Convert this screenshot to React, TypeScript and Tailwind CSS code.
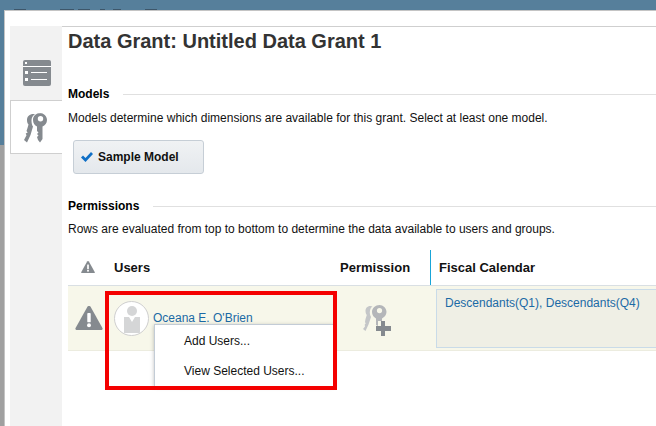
import React from 'react';

const font = { fontFamily: '"Liberation Sans", Arial, sans-serif' };

const ListIcon = () => (
  <svg width="28" height="26" viewBox="0 0 28 26">
    <rect x="0" y="0" width="28" height="26" rx="2" fill="#858a8f" />
    <rect x="2" y="2" width="2" height="2" fill="#fff" />
    <rect x="2" y="11" width="3" height="3" fill="#fff" />
    <rect x="2" y="18" width="3" height="3" fill="#fff" />
    <rect x="0" y="6" width="28" height="1" fill="#fff" />
    <rect x="8" y="12" width="16" height="1" fill="#fff" />
    <rect x="8" y="19" width="16" height="1" fill="#fff" />
  </svg>
);

const KeysIcon = () => (
  <svg width="27" height="31" viewBox="0 0 27 31">
    <path
      d="M9.500 1C5.500 1 3 3.500 3 7c0 2 .6 3.500 1.500 4.500L3.500 15l-1 3 1.200 1.500-2 1 .8 1.800L0 27l3 2.500 3.500-7.500 2.500-8.500c-1-1-1.500-3.500-1.500-6C7.500 5 8.500 2.500 11 1.200z"
      fill="#858a8f"
    />
    <path
      fillRule="evenodd"
      d="M16.500 0C12 0 9 3 9 7c0 3.200 1.700 5.600 4 6.600V18l1.500 1.500-1.500 1.500 1.500 1.500-1.500 1.500 1 3 2 2.500 2.500-3.500V13.600c2.500-1 4.500-3.400 4.500-6.600 0-4-3.500-7-7-7zm0 3a2.700 2.700 0 1 1 0 5.400 2.700 2.700 0 0 1 0-5.400z"
      fill="#858a8f"
    />
  </svg>
);

const KeyPlusIcon = () => (
  <svg width="28" height="31" viewBox="0 0 28 31">
    <path d="M7.500 1C4 1 2.500 3.500 2.500 6c0 1.500.5 3 1.300 4L2.500 14l-.5 3 .7 1.500-1 1 .3 2L0 24l2.500 2 3-6.500L8 12C7 10 6.500 8 7 5.500 7.300 4 8 2.500 9.500 1.500z" fill="#c4c6c8" />
    <path
      fillRule="evenodd"
      d="M16.500 0C12.500 0 9 3 9 7c0 3 1.800 5.300 4 6.400V20l2 1v-5h4v-2.600c2.300-1.100 4.500-3.400 4.500-6.400 0-4-3.500-7-7-7zm0 3a2.600 2.600 0 1 1 0 5.200 2.600 2.600 0 0 1 0-5.200z"
      fill="#b4b6b9"
    />
    <path d="M18 16h4v5h6v5h-6v5h-4v-5h-5v-5h5z" fill="#858a8f" />
  </svg>
);

const Warning = ({ size }: { size: number }) => (
  <svg width={size} height={size * 0.86} viewBox="0 0 32 28">
    <path d="M16 0c1 0 1.600.5 2 1.200l13.600 24.300c.7 1.300 0 2.500-1.500 2.500H1.900C.4 28-.3 26.800.4 25.500L14 1.200C14.400.5 15 0 16 0z" fill="#858a8f" />
    <rect x="14" y="8" width="4" height="11" rx="1" fill="#fff" />
    <circle cx="16" cy="22.500" r="2.300" fill="#fff" />
  </svg>
);

const Avatar = () => (
  <div className="flex h-[35px] w-[35px] items-end justify-center overflow-hidden rounded-full border border-[#cfcfcf] bg-white pb-[2px]">
    <svg width="16" height="27" viewBox="0 0 16 27">
      <circle cx="8" cy="5" r="5" fill="#d5d6d7" />
      <path d="M0 11h5l3 5 3-5h5v16H0z" fill="#d5d6d7" />
    </svg>
  </div>
);

const Section = ({ title, gap, children }: { title: string; gap: string; children: React.ReactNode }) => (
  <div>
    <div className="flex items-center gap-[14px]">
      <h2 className="text-[12px] leading-[14px] font-bold text-[#000]">{title}</h2>
      <div className="h-px flex-1 bg-[#e0e0e0]" />
    </div>
    <p className={`${gap} text-[12px] leading-[14px] text-[#111]`}>{children}</p>
  </div>
);

// clipped text of the page behind the dialog
const behind = [
  ['left-[14px]', 'w-[12px]'],
  ['left-[60px]', 'w-[14px]'],
  ['left-[78px]', 'w-[12px]'],
  ['left-[100px]', 'w-[5px]'],
  ['left-[113px]', 'w-[8px]'],
  ['left-[145px]', 'w-[12px]'],
];

export default function App() {
  return (
    <div className="relative flex h-[426px] w-[656px] overflow-hidden bg-[#567f9b]" style={font}>
      {behind.map(([left, width]) => (
        <div key={left} className={`absolute top-[9px] h-px bg-[#3d566a] ${left} ${width}`} />
      ))}

      <div className="flex w-[4px] flex-col">
        <div className="h-[145px] bg-[#567f9b]" />
        <div className="flex-1 bg-[#a0a0a0]" />
      </div>

      <div className="mt-[10px] flex flex-1 flex-col border-t border-l border-[#c4c4c4] bg-white pt-[15px] pl-[5px]">
        <div className="flex flex-1">
          {/* left tabs */}
          <div className="w-[52px] shrink-0 bg-[#f2f2f2]">
            <div className="flex h-[74px] items-end justify-center pb-[14px] pl-[2px]">
              <ListIcon />
            </div>
            <div className="flex h-[54px] w-[52px] items-center justify-center border-y border-l border-[#cfcfcf] bg-white pt-[3px] pl-[2px]">
              <KeysIcon />
            </div>
          </div>

          <div className="flex-1 border-t border-[#cfcfcf]">
            <div className="pl-[6px]">
              <h1 className="mt-[3px] text-[20px] leading-[22px] font-bold text-[#333]">Data Grant: Untitled Data Grant 1</h1>

              <div className="mt-[35px]">
                <Section title="Models" gap="mt-[10px]">
                  Models determine which dimensions are available for this grant. Select at least one model.
                </Section>
              </div>

              <button className="mt-[15px] ml-[5px] flex h-[34px] w-[131px] items-center gap-[5px] rounded-[3px] border border-[#c6ced6] bg-gradient-to-b from-[#f0f2f4] to-[#e4e8ec] pl-[7px] text-[12px] font-bold text-[#111]">
                <svg width="12" height="10" viewBox="0 0 12 10">
                  <path d="M0 5.500 2 3.500 4.500 6 10 0l2 2-7.500 8z" fill="#0f6fc6" />
                </svg>
                Sample Model
              </button>

              <div className="mt-[25px]">
                <Section title="Permissions" gap="mt-[9px]">
                  Rows are evaluated from top to bottom to determine the data available to users and groups.
                </Section>
              </div>
            </div>

            {/* table */}
            <div className="mt-[14px] ml-[6px]">
              <div className="flex h-[36px] items-center border-b border-[#d9dfe3] text-[13px] font-bold text-[#111]">
                <div className="flex w-[40px] justify-center">
                  <Warning size={14} />
                </div>
                <div className="w-[232px] pl-[6px]">Users</div>
                <div className="w-[90px]">Permission</div>
                <div className="flex h-full items-center border-l border-[#19a5d8] pl-[8px]">Fiscal Calendar</div>
              </div>
              <div className="flex h-[65px] border-b border-[#ececdf] bg-[#f7f7ea]">
                <div className="flex w-[40px] items-center justify-center pl-[2px]">
                  <Warning size={28} />
                </div>
                <div className="flex w-[232px] gap-[4px] pt-[15px] pl-[6px]">
                  <Avatar />
                  <a className="mt-[10px] text-[12px] leading-[14px] text-[#1b6aa5]">Oceana E. O'Brien</a>
                </div>
                <div className="w-[90px] pt-[19px] pl-[23px]">
                  <KeyPlusIcon />
                </div>
                <div className="mt-[3px] ml-[6px] h-[59px] flex-1 border border-r-0 border-[#c9dbe8] bg-[#efefe5] pt-[6px] pl-[8px] text-[12px] leading-[14px] text-[#1b6aa5]">
                  Descendants(Q1), Descendants(Q4)
                </div>
              </div>
            </div>
          </div>
        </div>
      </div>

      {/* context menu */}
      <div className="absolute top-[324px] left-[154px] h-[62px] w-[180px] border-t border-l border-[#c3ccd6] bg-white pt-[9px] pl-[29px] text-[12px] text-[#111] shadow-[0_1px_4px_rgba(0,0,0,0.25)]">
        <div className="leading-[14px]">Add Users...</div>
        <div className="mt-[16px] leading-[14px]">View Selected Users...</div>
      </div>

      {/* red callout */}
      <div className="pointer-events-none absolute top-[291px] left-[105px] h-[99px] w-[232px] border-4 border-[#f40000]" />
    </div>
  );
}
